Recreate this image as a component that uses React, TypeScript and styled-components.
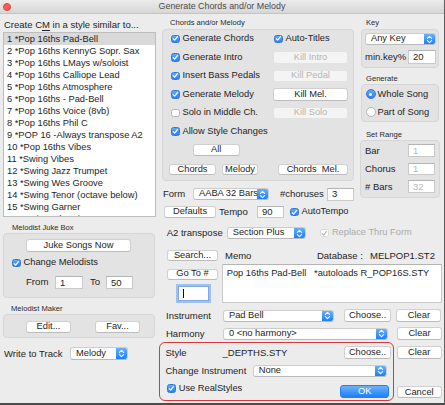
import React from "react";
import styled, { createGlobalStyle, css } from "styled-components";

const Global = createGlobalStyle`
  html, body { margin: 0; padding: 0; background: #ececec; }
  body { font-family: "Liberation Sans", Arial, Helvetica, sans-serif; color: #1e1e1e; }
  *, *::before, *::after { box-sizing: border-box; }
`;

const Window = styled.div`
  width: 445px;
  height: 405px;
  background: #ececec;
  border-right: 1px solid #5c5c5c;
  border-bottom: 2px solid #4d4d4d;
  border-top-left-radius: 5px;
  overflow: hidden;
  display: flex;
  flex-direction: column;
  font-size: 9.3px;
  line-height: 1;
`;

const TitleBar = styled.div`
  height: 14px;
  flex: none;
  display: grid;
  grid-template-columns: 1fr auto 1fr;
  align-items: center;
  background: linear-gradient(#ebebeb, #d7d7d7);
  border-bottom: 1px solid #c4c4c4;
`;

const CloseDot = styled.span`
  width: 8px;
  height: 8px;
  border-radius: 50%;
  background: #fc5e56;
  border: 0.5px solid #de463e;
  margin-left: 2.5px;
`;

const Title = styled.div`
  font-size: 8.9px;
  color: #4b4b4b;
  white-space: nowrap;
`;

const Body = styled.div`
  display: flex;
  padding-left: 3px;
  flex: 1;
`;

const LeftCol = styled.div`
  width: 153px;
  flex: none;
  display: flex;
  flex-direction: column;
`;

const Heading = styled.div`
  margin-top: 5px;
  padding-left: 1px;
  font-size: 9.5px;
  line-height: 12px;
  height: 12px;
  white-space: nowrap;
  u { text-decoration: underline; text-underline-offset: 1.5px; }
`;

const List = styled.div`
  margin-top: 1px;
  height: 185px;
  background: #fff;
  border: 1px solid #bdbdbd;
  overflow: hidden;
  flex: none;
`;

const ListRow = styled.div<{ $sel?: boolean }>`
  height: 12px;
  line-height: 12px;
  padding-left: 3px;
  white-space: nowrap;
  background: ${(p) => (p.$sel ? "#d9d9d9" : "transparent")};
`;

const GroupLabel = styled.div<{ $mt: number; $pl: number }>`
  margin-top: ${(p) => p.$mt}px;
  padding-left: ${(p) => p.$pl}px;
  font-size: 7.6px;
  line-height: 10px;
  height: 10px;
  color: #2a2a2a;
  white-space: nowrap;
  flex: none;
`;

const GroupBox = styled.div<{ $w: number; $h: number; $ml?: number; $mt?: number; $pt?: number }>`
  width: ${(p) => p.$w}px;
  height: ${(p) => p.$h}px;
  margin-left: ${(p) => p.$ml ?? 0}px;
  margin-top: ${(p) => p.$mt ?? 0}px;
  padding-top: ${(p) => p.$pt ?? 0}px;
  background: #e3e3e3;
  border: 1px solid #d6d6d6;
  border-radius: 4px;
  display: flex;
  flex-direction: column;
  flex: none;
`;

const Row = styled.div<{ $mt?: number; $pl?: number; $h?: number; $align?: string }>`
  display: flex;
  align-items: ${(p) => p.$align ?? "center"};
  margin-top: ${(p) => p.$mt ?? 0}px;
  padding-left: ${(p) => p.$pl ?? 0}px;
  height: ${(p) => (p.$h ? `${p.$h}px` : "auto")};
  flex: none;
`;

const Cell = styled.div<{ $w: number }>`
  width: ${(p) => p.$w}px;
  flex: none;
  display: flex;
  align-items: center;
`;

const Label = styled.span<{ $w?: number; $ml?: number; $size?: number }>`
  width: ${(p) => (p.$w ? `${p.$w}px` : "auto")};
  margin-left: ${(p) => p.$ml ?? 0}px;
  flex: none;
  white-space: nowrap;
  font-size: ${(p) => p.$size ?? 9.3}px;
`;

const Btn = styled.div<{
  $w: number;
  $h?: number;
  $ml?: number;
  $mt?: number;
  $disabled?: boolean;
  $primary?: boolean;
}>`
  width: ${(p) => p.$w}px;
  height: ${(p) => p.$h ?? 12.5}px;
  margin-left: ${(p) => p.$ml ?? 0}px;
  margin-top: ${(p) => p.$mt ?? 0}px;
  flex: none;
  display: flex;
  align-items: center;
  justify-content: center;
  border-radius: 3px;
  white-space: nowrap;
  background: #fff;
  border: 1px solid #d0d0d0;
  border-bottom-color: #bcbcbc;
  color: #1e1e1e;
  ${(p) =>
    p.$disabled &&
    css`
      background: #f4f4f4;
      border-color: #e2e2e2;
      color: #b4b4b4;
    `}
  ${(p) =>
    p.$primary &&
    css`
      background: linear-gradient(#6cb2fb, #1c80f7);
      border-color: #2d7ee6;
      color: #fff;
    `}
`;

const SelectBox = styled.div<{ $w: number; $h?: number; $ml?: number }>`
  width: ${(p) => p.$w}px;
  height: ${(p) => p.$h ?? 12.5}px;
  margin-left: ${(p) => p.$ml ?? 0}px;
  flex: none;
  display: flex;
  align-items: center;
  background: #fff;
  border: 1px solid #cdcdcd;
  border-bottom-color: #b9b9b9;
  border-radius: 3px;
  overflow: hidden;
`;

const SelectText = styled.span`
  flex: 1;
  padding-left: 5px;
  white-space: nowrap;
  overflow: hidden;
`;

const Stepper = styled.span`
  width: 11px;
  align-self: stretch;
  display: flex;
  align-items: center;
  justify-content: center;
  background: linear-gradient(#67affb, #1e7ff5);
`;

const Field = styled.div<{
  $w: number;
  $h?: number;
  $ml?: number;
  $mt?: number;
  $disabled?: boolean;
  $focus?: boolean;
}>`
  width: ${(p) => p.$w}px;
  height: ${(p) => p.$h ?? 13}px;
  margin-left: ${(p) => p.$ml ?? 0}px;
  margin-top: ${(p) => p.$mt ?? 0}px;
  flex: none;
  display: flex;
  align-items: center;
  padding-left: 4px;
  background: #fff;
  border: 1px solid #c9c9c9;
  border-top-color: #b4b4b4;
  font-size: 9.5px;
  color: ${(p) => (p.$disabled ? "#b8b8b8" : "#1e1e1e")};
  ${(p) =>
    p.$focus &&
    css`
      border-color: #7ea9e4;
      box-shadow: 0 0 0 2px rgba(110, 165, 240, 0.6);
    `}
`;

const Caret = styled.span`
  width: 1px;
  height: 9px;
  background: #111;
`;

const CheckRow = styled.label<{ $ml?: number; $muted?: boolean }>`
  display: flex;
  align-items: center;
  height: 11px;
  margin-left: ${(p) => p.$ml ?? 0}px;
  white-space: nowrap;
  flex: none;
  color: ${(p) => (p.$muted ? "#ababab" : "inherit")};
`;

const CheckBox = styled.span<{ $on: boolean; $disabled: boolean }>`
  width: 8.5px;
  height: 8.5px;
  border-radius: 2.5px;
  margin-right: 3px;
  flex: none;
  display: inline-flex;
  align-items: center;
  justify-content: center;
  ${(p) =>
    p.$on && !p.$disabled
      ? css`
          background: linear-gradient(#62a8fb, #2c80f6);
          border: 0.5px solid #2b77de;
        `
      : css`
          background: #fff;
          border: 1px solid ${p.$disabled ? "#d8d8d8" : "#b5b5b5"};
        `}
`;

const RadioDot = styled.span<{ $on?: boolean }>`
  width: 10px;
  height: 10px;
  border-radius: 50%;
  flex: none;
  margin-right: 2px;
  display: flex;
  align-items: center;
  justify-content: center;
  ${(p) =>
    p.$on
      ? css`
          background: linear-gradient(#62a8fb, #2c80f6);
          border: 0.5px solid #2b77de;
          &::after {
            content: "";
            width: 3.5px;
            height: 3.5px;
            border-radius: 50%;
            background: #fff;
          }
        `
      : css`
          background: #fff;
          border: 1px solid #b5b5b5;
        `}
`;

const RightArea = styled.div`
  margin-left: 3px;
  width: 283px;
  flex: none;
  display: flex;
  flex-direction: column;
`;

const Upper = styled.div`
  display: flex;
  flex: none;
`;

const ColA = styled.div`
  margin-left: 3px;
  width: 192px;
  flex: none;
  display: flex;
  flex-direction: column;
`;

const ColB = styled.div`
  margin-left: 6px;
  width: 80px;
  flex: none;
  display: flex;
  flex-direction: column;
`;

const GoCol = styled.div`
  width: 62.7px;
  padding-left: 7.7px;
  flex: none;
  display: flex;
  flex-direction: column;
`;

const Memo = styled.div`
  width: 220px;
  height: 39.3px;
  flex: none;
  background: #fff;
  border: 1px solid #c9c9c9;
  border-top-color: #b4b4b4;
  padding: 2px 4px;
  line-height: 12px;
  white-space: pre;
  overflow: hidden;
`;

const RedBox = styled.div`
  width: 235.3px;
  height: 58.4px;
  flex: none;
  border: 1.5px solid #d33a40;
  border-radius: 6px;
  display: flex;
  flex-direction: column;
`;

const SideCol = styled.div`
  margin-left: 2.4px;
  display: flex;
  flex-direction: column;
  flex: none;
`;

const Grow = styled.div<{ $w: number }>`
  width: ${(p) => p.$w}px;
  flex: none;
  display: flex;
  align-items: center;
`;

function Check({
  children,
  on = true,
  disabled = false,
  ml,
}: {
  children: React.ReactNode;
  on?: boolean;
  disabled?: boolean;
  ml?: number;
}) {
  return (
    <CheckRow $ml={ml} $muted={disabled}>
      <CheckBox $on={on} $disabled={disabled}>
        {on && (
          <svg width="7" height="7" viewBox="0 0 7 7">
            <path
              d="M1.3 3.7 L2.9 5.2 L5.8 1.6"
              fill="none"
              stroke={disabled ? "#b3b3b3" : "#fff"}
              strokeWidth="1.3"
              strokeLinecap="round"
              strokeLinejoin="round"
            />
          </svg>
        )}
      </CheckBox>
      {children}
    </CheckRow>
  );
}

function Select({
  w,
  h,
  ml,
  children,
}: {
  w: number;
  h?: number;
  ml?: number;
  children: React.ReactNode;
}) {
  return (
    <SelectBox $w={w} $h={h} $ml={ml}>
      <SelectText>{children}</SelectText>
      <Stepper>
        <svg width="7" height="9" viewBox="0 0 7 9">
          <path
            d="M1.4 3.3 L3.5 1.3 L5.6 3.3 M1.4 5.7 L3.5 7.7 L5.6 5.7"
            fill="none"
            stroke="#fff"
            strokeWidth="1.1"
            strokeLinecap="round"
            strokeLinejoin="round"
          />
        </svg>
      </Stepper>
    </SelectBox>
  );
}

function Radio({ on, children }: { on?: boolean; children: React.ReactNode }) {
  return (
    <CheckRow>
      <RadioDot $on={on} />
      {children}
    </CheckRow>
  );
}

const styles = [
  "1 *Pop 16ths Pad-Bell",
  "2 *Pop 16ths KennyG Sopr. Sax",
  "3 *Pop 16ths LMays w/soloist",
  "4 *Pop 16ths Calliope Lead",
  "5 *Pop 16ths Atmosphere",
  "6 *Pop 16ths - Pad-Bell",
  "7 *Pop 16ths Voice (8vb)",
  "8 *Pop 16ths Phil C",
  "9 *POP 16 -Always transpose A2",
  "10 *Pop 16ths Vibes",
  "11 *Swing Vibes",
  "12 *Swing Jazz Trumpet",
  "13 *Swing Wes Groove",
  "14 *Swing Tenor (octave below)",
  "15 *Swing Garner",
  "16 *Swing 8ths Sinatra",
];

export default function App() {
  return (
    <>
      <Global />
      <Window>
        <TitleBar>
          <CloseDot />
          <Title>Generate Chords and/or Melody</Title>
          <span />
        </TitleBar>
        <Body>
          <LeftCol>
            <Heading>
              Create C<u>M</u> in a style similar to...
            </Heading>
            <List>
              {styles.map((s, i) => (
                <ListRow key={s} $sel={i === 0}>
                  {s}
                </ListRow>
              ))}
            </List>
            <GroupLabel $mt={6} $pl={9}>
              Melodist Juke Box
            </GroupLabel>
            <GroupBox $w={152} $h={65} $pt={5}>
              <Row $pl={22}>
                <Btn $w={105} $h={13}>
                  Juke Songs Now
                </Btn>
              </Row>
              <Row $mt={5.5} $pl={8} $h={11}>
                <Check>Change Melodists</Check>
              </Row>
              <Row $mt={7} $pl={22} $h={13.5}>
                <Label $w={29} $size={9.6}>
                  From
                </Label>
                <Field $w={28} $h={13.5}>
                  1
                </Field>
                <Label $w={16} $ml={7} $size={9.6}>
                  To
                </Label>
                <Field $w={27} $h={13.5}>
                  50
                </Field>
              </Row>
            </GroupBox>
            <GroupLabel $mt={6} $pl={8}>
              Melodist Maker
            </GroupLabel>
            <GroupBox $w={152} $h={24} $pt={6}>
              <Row $pl={22}>
                <Btn $w={45} $h={12}>
                  Edit...
                </Btn>
                <Btn $w={45} $h={12} $ml={24}>
                  Fav...
                </Btn>
              </Row>
            </GroupBox>
            <Row $mt={9} $pl={1} $h={13}>
              <Label $w={66} $size={9.5}>
                Write to Track
              </Label>
              <Select w={58} h={13}>
                Melody
              </Select>
            </Row>
          </LeftCol>

          <RightArea>
            <Upper>
              <ColA>
                <GroupLabel $mt={4} $pl={8}>
                  Chords and/or Melody
                </GroupLabel>
                <GroupBox $w={192} $h={152} $mt={1} $pt={2.5}>
                  <Row $pl={8} $h={12.5}>
                    <Cell $w={102}>
                      <Check>Generate Chords</Check>
                    </Cell>
                    <Check ml={1}>Auto-Titles</Check>
                  </Row>
                  <Row $mt={6} $pl={8} $h={12.5}>
                    <Cell $w={102}>
                      <Check>Generate Intro</Check>
                    </Cell>
                    <Btn $w={75} $disabled>
                      Kill Intro
                    </Btn>
                  </Row>
                  <Row $mt={6} $pl={8} $h={12.5}>
                    <Cell $w={102}>
                      <Check>Insert Bass Pedals</Check>
                    </Cell>
                    <Btn $w={75} $disabled>
                      Kill Pedal
                    </Btn>
                  </Row>
                  <Row $mt={6} $pl={8} $h={12.5}>
                    <Cell $w={102}>
                      <Check>Generate Melody</Check>
                    </Cell>
                    <Btn $w={75}>Kill Mel.</Btn>
                  </Row>
                  <Row $mt={6} $pl={8} $h={12.5}>
                    <Cell $w={102}>
                      <Check on={false}>Solo in Middle Ch.</Check>
                    </Cell>
                    <Btn $w={75} $disabled>
                      Kill Solo
                    </Btn>
                  </Row>
                  <Row $mt={6} $pl={8} $h={12.5}>
                    <Check>Allow Style Changes</Check>
                  </Row>
                  <Row $mt={6.5} $pl={29.7}>
                    <Btn $w={47} $h={12}>
                      All
                    </Btn>
                  </Row>
                  <Row $mt={7.5} $pl={6}>
                    <Btn $w={47} $h={11.5}>
                      Chords
                    </Btn>
                    <Btn $w={36} $h={11.5} $ml={6}>
                      Melody
                    </Btn>
                    <Btn $w={70} $h={11.5} $ml={20}>
                      Chords&nbsp;&nbsp;Mel.
                    </Btn>
                  </Row>
                </GroupBox>
                <Row $mt={6.5} $pl={1} $h={13}>
                  <Label $w={30} $size={9.5}>
                    Form
                  </Label>
                  <Select w={76} h={12.5}>
                    AABA 32 Bars
                  </Select>
                  <Label $w={47} $ml={11} $size={9.5}>
                    #choruses
                  </Label>
                  <Field $w={27} $h={13}>
                    3
                  </Field>
                </Row>
              </ColA>

              <ColB>
                <GroupLabel $mt={4} $pl={6}>
                  Key
                </GroupLabel>
                <GroupBox $w={78} $h={39.3} $ml={1} $mt={1} $pt={3.3}>
                  <Row $pl={3}>
                    <Select w={71} h={11.7}>
                      Any Key
                    </Select>
                  </Row>
                  <Row $mt={5} $pl={3} $h={14}>
                    <Label $w={43} $size={9.5}>
                      min.key%
                    </Label>
                    <Field $w={28} $h={14}>
                      20
                    </Field>
                  </Row>
                </GroupBox>
                <GroupLabel $mt={5.5} $pl={6}>
                  Generate
                </GroupLabel>
                <GroupBox $w={78} $h={38.4} $ml={1} $pt={4.2}>
                  <Row $pl={3.5} $h={11}>
                    <Radio on>Whole Song</Radio>
                  </Row>
                  <Row $mt={6.7} $pl={3.5} $h={11}>
                    <Radio>Part of Song</Radio>
                  </Row>
                </GroupBox>
                <GroupLabel $mt={8} $pl={6}>
                  Set Range
                </GroupLabel>
                <GroupBox $w={80} $h={58} $pt={3}>
                  <Row $pl={4} $h={12.5}>
                    <Label $w={43} $size={9.5}>
                      Bar
                    </Label>
                    <Field $w={27} $h={12.5} $disabled>
                      1
                    </Field>
                  </Row>
                  <Row $mt={6.3} $pl={4} $h={12.5}>
                    <Label $w={43} $size={9.5}>
                      Chorus
                    </Label>
                    <Field $w={27} $h={12.5} $disabled>
                      1
                    </Field>
                  </Row>
                  <Row $mt={5} $pl={4} $h={13}>
                    <Label $w={43} $size={9.5}>
                      # Bars
                    </Label>
                    <Field $w={27} $h={13} $disabled>
                      32
                    </Field>
                  </Row>
                </GroupBox>
              </ColB>
            </Upper>

            <Row $mt={5} $pl={5} $h={13}>
              <Btn $w={52} $h={12}>
                Defaults
              </Btn>
              <Label $w={38} $ml={3} $size={9.6}>
                Tempo
              </Label>
              <Field $w={27} $h={12.5}>
                90
              </Field>
              <Check ml={6}>AutoTempo</Check>
            </Row>

            <Row $mt={8} $pl={7.7} $h={13}>
              <Label $w={60} $size={9.5}>
                A2 transpose
              </Label>
              <Select w={79} h={12.7}>
                Section Plus
              </Select>
              <Check ml={14.7} disabled>
                Replace Thru Form
              </Check>
            </Row>

            <Row $mt={10} $pl={7.7} $h={11.5}>
              <Btn $w={51.6} $h={11.5}>
                Search...
              </Btn>
              <Label $w={92} $ml={6.7} $size={9.5}>
                Memo
              </Label>
              <Label $w={53} $size={9.5}>
                Database :
              </Label>
              <Label $size={9.5}>MELPOP1.ST2</Label>
            </Row>

            <Row $mt={2.5} $align="flex-start" $h={39.3}>
              <GoCol>
                <Btn $w={51.6} $h={11} $mt={5}>
                  Go To #
                </Btn>
                <Field $w={31} $h={15.7} $ml={11.3} $mt={6} $focus>
                  <Caret />
                </Field>
              </GoCol>
              <Memo>{"Pop 16ths Pad-Bell   *autoloads R_POP16S.STY"}</Memo>
            </Row>

            <Row $mt={6.7} $pl={7} $h={13}>
              <Label $w={57} $size={9.5}>
                Instrument
              </Label>
              <Select w={111} h={12.7}>
                Pad Bell
              </Select>
              <Btn $w={47.4} $h={13} $ml={10}>
                Choose..
              </Btn>
              <Btn $w={45} $h={13} $ml={5}>
                Clear
              </Btn>
            </Row>

            <Row $mt={5} $pl={7} $h={12.5}>
              <Label $w={57} $size={9.5}>
                Harmony
              </Label>
              <Select w={165} h={12}>
                0 &lt;no harmony&gt;
              </Select>
              <Btn $w={45} $h={12.5} $ml={9}>
                Clear
              </Btn>
            </Row>

            <Row $mt={2.5} $align="flex-start">
              <RedBox>
                <Row $mt={2.5} $pl={5.5} $h={12.7}>
                  <Label $w={57} $size={9.5}>
                    Style
                  </Label>
                  <Label $w={121.3} $size={9.5}>
                    _DEPTHS.STY
                  </Label>
                  <Btn $w={47.4} $h={12.7}>
                    Choose..
                  </Btn>
                </Row>
                <Row $mt={6} $pl={5.5} $h={12.3}>
                  <Label $w={87.3} $size={9.5}>
                    Change Instrument
                  </Label>
                  <Select w={134.4} h={12.3}>
                    None
                  </Select>
                </Row>
                <Row $mt={5.9} $pl={7.2} $align="flex-start">
                  <Grow $w={173.3}>
                    <Check>Use RealStyles</Check>
                  </Grow>
                  <Btn $w={48.3} $h={12.6} $mt={2.5} $primary>
                    OK
                  </Btn>
                </Row>
              </RedBox>
              <SideCol>
                <Btn $w={45} $h={12.7} $mt={4}>
                  Clear
                </Btn>
                <Btn $w={45} $h={12.6} $mt={26.7}>
                  Cancel
                </Btn>
              </SideCol>
            </Row>
          </RightArea>
        </Body>
      </Window>
    </>
  );
}
